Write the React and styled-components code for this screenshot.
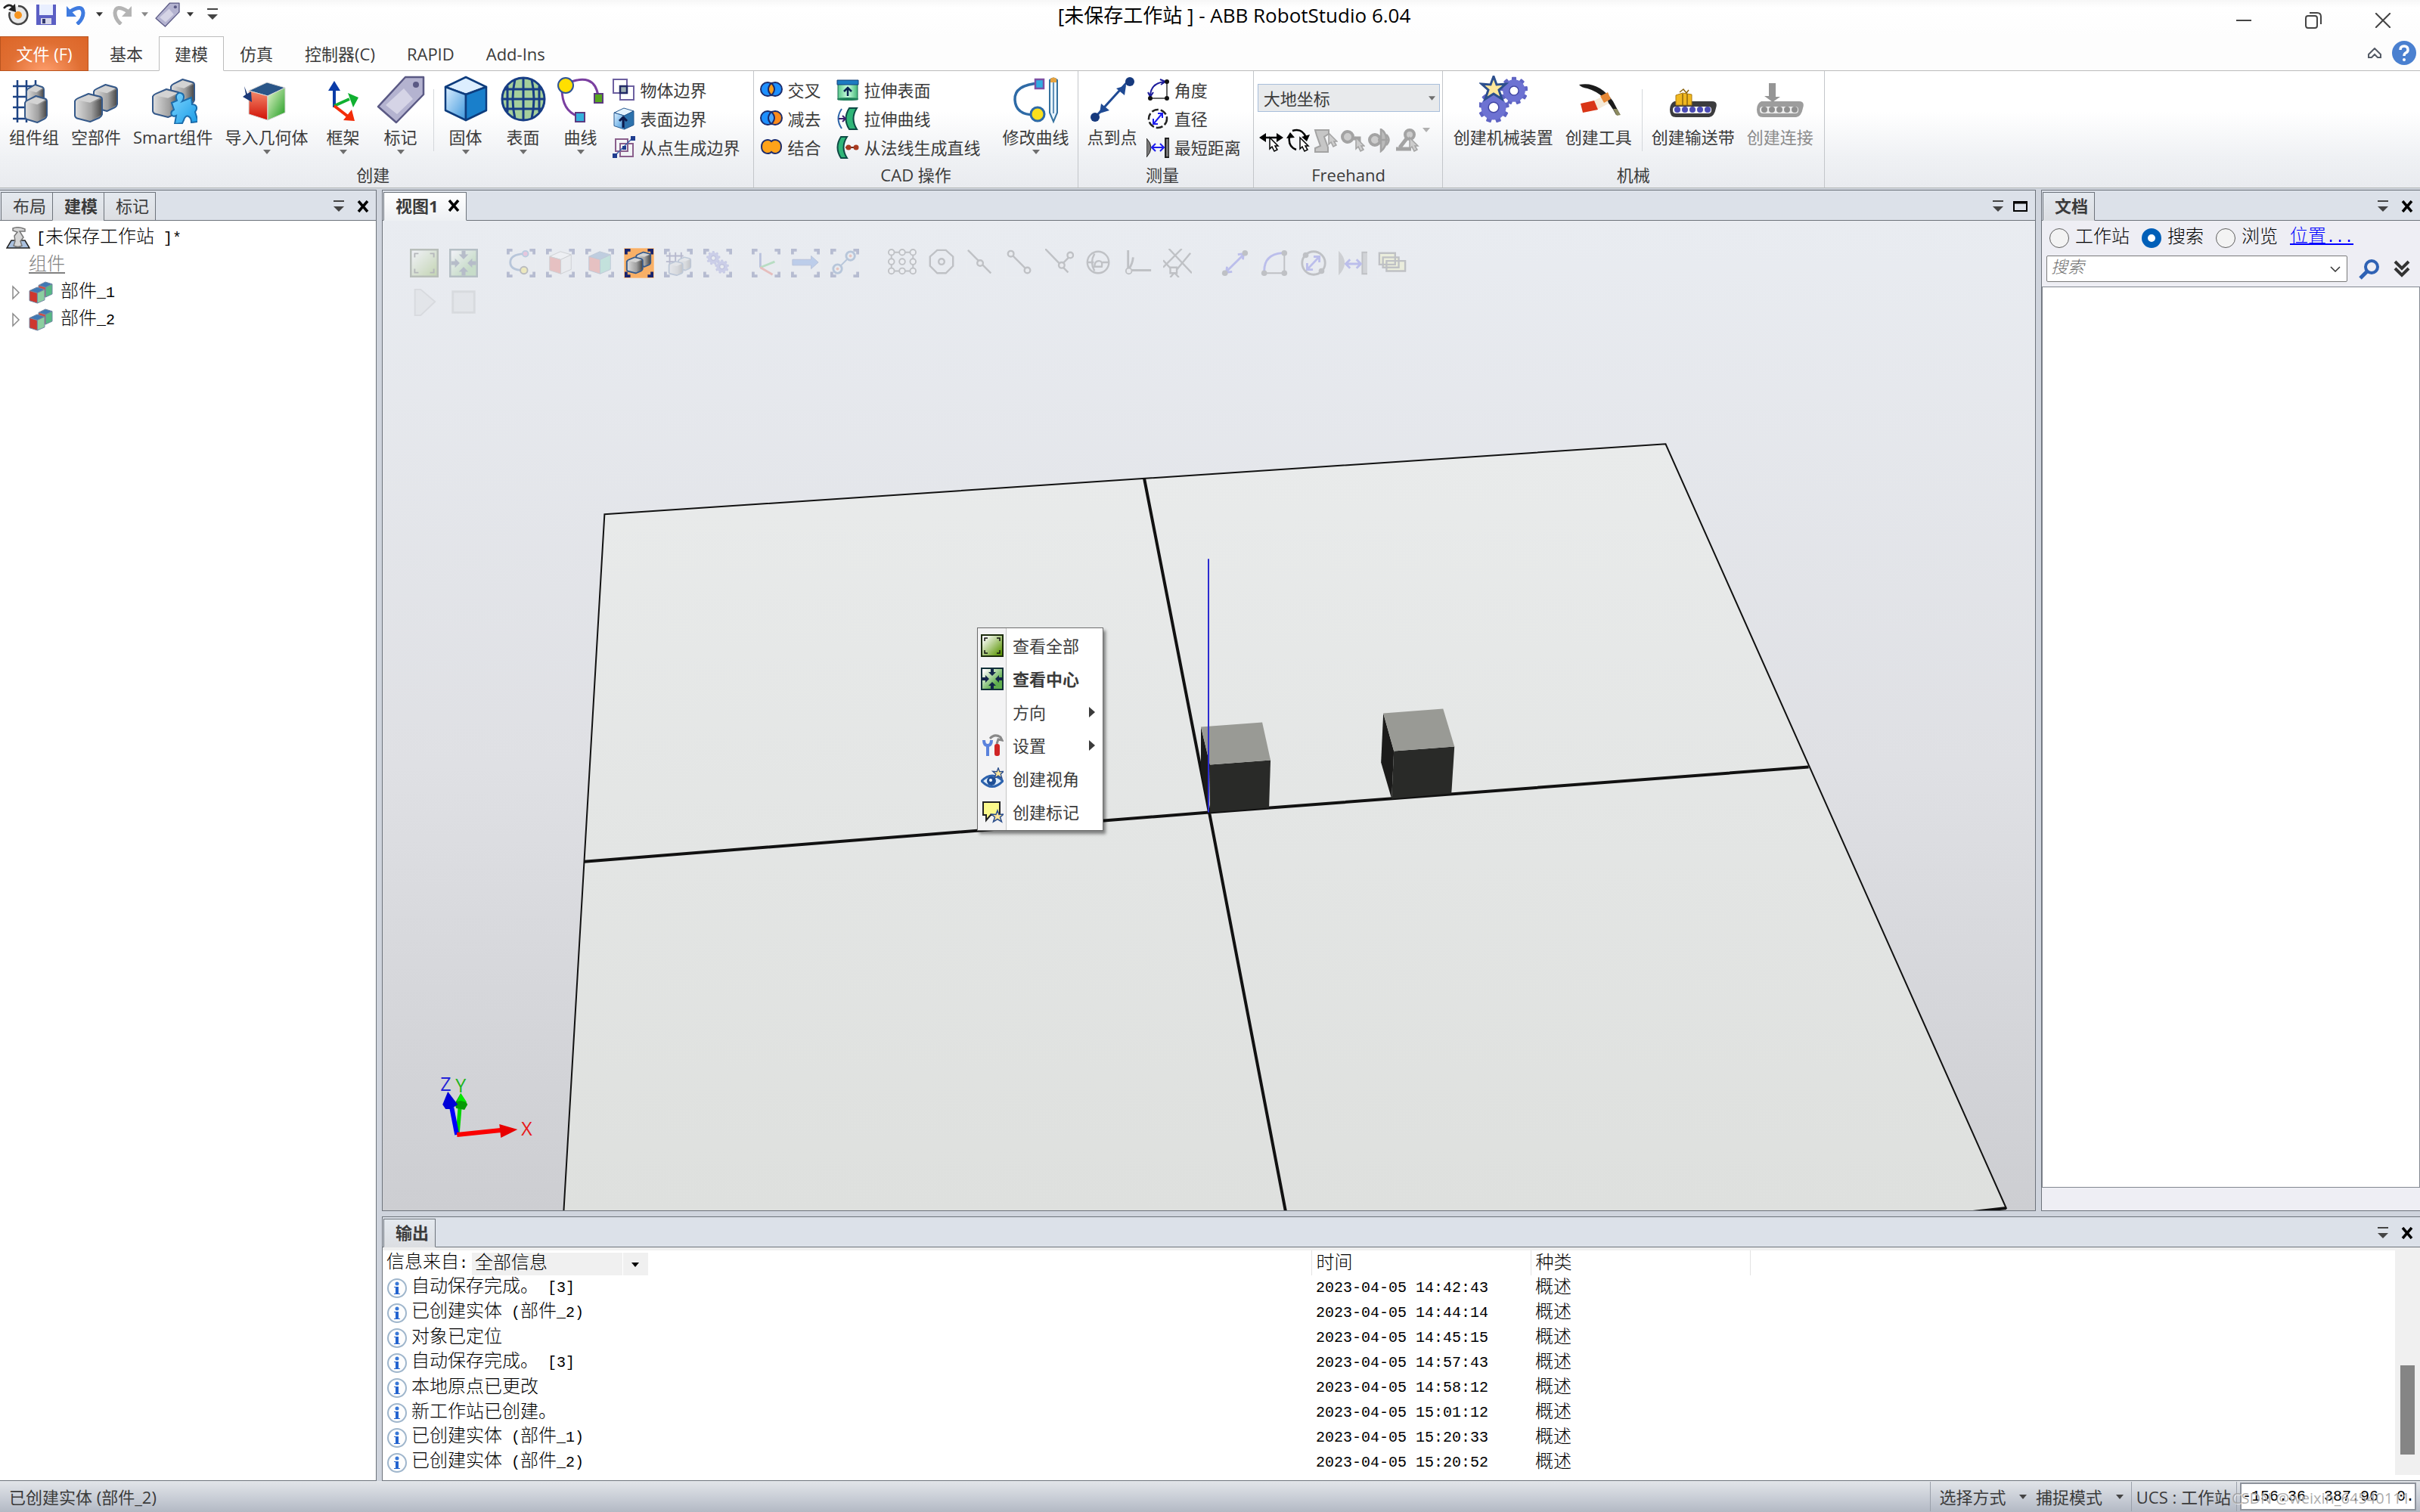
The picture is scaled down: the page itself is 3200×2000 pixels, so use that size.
import React from 'react';
import styled, { createGlobalStyle, css } from 'styled-components';

const UI_FONT = '"Open Sans", "Noto Sans CJK SC", sans-serif';
const SONG_FONT = '"Liberation Mono", "Noto Sans CJK SC", monospace';

const GlobalStyle = createGlobalStyle`
  * {
    box-sizing: border-box;
  }
  body {
    margin: 0;
    background: #cfd4dd;
    color: #3b3b3b;
    font-family: ${UI_FONT};
    font-size: 22px;
    line-height: 30px;
  }
  button, input, select {
    font: inherit;
    color: inherit;
    border: 0;
    padding: 0;
    margin: 0;
    background: none;
    appearance: none;
    border-radius: 0;
  }
  svg {
    display: block;
    flex: none;
  }
`;

const Page = styled.div`
  min-height: 100vh;
  display: flex;
  flex-direction: column;
`;

/* ---------- title bar ---------- */

const TitleBar = styled.header`
  display: flex;
  height: 48px;
  padding-right: 3px;
  background: linear-gradient(#f7f7f7, #fff 10px, #fdfdfd);
`;

const QuickAccess = styled.div`
  display: flex;
  align-items: center;
  min-width: 343px;
  height: 38px;
  padding-left: 1px;
`;

const QuickButton = styled.button`
  display: flex;
  align-items: center;
  justify-content: center;
  width: ${(p) => (p.$narrow ? '20px' : '40px')};
  height: 36px;
  color: #3b3b3b;
`;

const AppTitle = styled.h1`
  flex: 1;
  margin: 0;
  text-align: center;
  font-size: 26px;
  line-height: 40px;
  font-weight: 400;
  color: #000;
`;

const WindowButton = styled.button`
  display: flex;
  align-items: center;
  justify-content: center;
  width: 92px;
  height: 54px;
`;

/* ---------- ribbon ---------- */

const RibbonTabs = styled.nav`
  display: flex;
  height: 46px;
  background: #fdfdfd;
  border-bottom: 1px solid #bcbcbc;
`;

const RibbonTab = styled.button`
  height: 46px;
  padding: 0 20px;
  border: 1px solid transparent;
  ${(p) =>
    p.$active &&
    css`
      background: #fff;
      border-color: #bcbcbc;
      border-bottom-color: #fff;
    `}
`;

const FileTab = styled.button`
  width: 117px;
  margin-right: 7px;
  height: 46px;
  color: #fff;
  border: 1px solid #b9541f;
  background: radial-gradient(ellipse at 50% 110%, #ff9f6e, #e06f33 60%, #dc6527);
`;

const TabsEnd = styled.div`
  margin-left: auto;
  padding: 0 5px 2px 0;
  display: flex;
  align-items: center;
  gap: 14px;
`;

const Ribbon = styled.section`
  display: flex;
  height: 155px;
  border-bottom: 1px solid #b5b9b8;
  background: linear-gradient(#fff 35%, #eff1f4 75%, #e9ebef);
`;

const Group = styled.div`
  display: flex;
  flex-direction: column;
  border-right: 1px solid #c3c6ca;
  padding: 6px ${(p) => p.$right || 3}px 0 ${(p) => p.$left || 4}px;
`;

const GroupBody = styled.div`
  display: flex;
  height: 117px;
`;

const GroupLabel = styled.div`
  text-align: center;
  line-height: 28px;
`;

const BigButton = styled.button`
  display: flex;
  flex-direction: column;
  align-items: center;
  min-width: 76px;
  height: 112px;
  padding: 0 8px;
  white-space: nowrap;
  line-height: 34px;
  color: ${(p) => (p.disabled ? '#8b8b8b' : '#3b3b3b')};

  svg:first-child {
    margin: 0 -4px;
  }
`;

const Divider = styled.div`
  width: 1px;
  height: 82px;
  margin: 18px 4px 0 5px;
  background: #d4d7db;
`;

const SmallColumn = styled.div`
  display: flex;
  flex-direction: column;
  margin-right: ${(p) => p.$after || 0}px;
`;

const SmallButton = styled.button`
  display: flex;
  align-items: center;
  gap: 7px;
  height: 38px;
  padding: 0 4px;
  white-space: nowrap;
`;

const FreehandColumn = styled.div`
  width: 241px;
  padding-top: 11px;
`;

const Combo = styled.label`
  position: relative;
  display: block;
  height: 37px;
  background: #e8eaec;
  border: 1px solid #a8bedb;

  select {
    width: 100%;
    height: 35px;
    padding-left: 7px;
  }
  svg {
    position: absolute;
    right: 5px;
    top: 15px;
    pointer-events: none;
  }
`;

const FreehandRow = styled.div`
  display: flex;
  gap: 4px;
  padding: 21px 0 0 2px;

  button {
    height: 34px;
  }
`;

/* ---------- docked panels ---------- */

const Workspace = styled.main`
  flex: 1;
  display: grid;
  grid-template-columns: 498px minmax(0, 1fr) 501px;
  grid-template-rows: 1fr auto;
  gap: 7px;
  padding-top: 2px;
`;

const Panel = styled.section`
  display: flex;
  flex-direction: column;
  min-width: 0;
  border: 1px solid #6d737b;
  border-left-width: ${(p) => (p.$flushLeft ? 0 : 1)}px;
  border-right-width: ${(p) => (p.$flushRight ? 0 : 1)}px;
  background: ${(p) => p.$bg || '#fff'};
  grid-row: ${(p) => p.$row || 'auto'};
  grid-column: ${(p) => p.$col || 'auto'};
`;

const PanelStrip = styled.div`
  display: flex;
  height: 40px;
  padding: 2px 9px 0 1px;
  background: #dce1e9;
  border-bottom: 1px solid #6d737b;
`;

const PanelTab = styled.button`
  display: flex;
  align-items: center;
  gap: 12px;
  height: 38px;
  padding: 0 8px 3px 15px;
  margin-right: -1px;
  border: 1px solid #6d737b;
  background: linear-gradient(#e4e9ef, #dcdee2);
  white-space: nowrap;
  ${(p) =>
    p.$active &&
    css`
      font-weight: 700;
      border-bottom-color: ${p.$light ? '#edf0f3' : '#dcdee2'};
      background: ${p.$light ? 'linear-gradient(#fff, #edf0f3)' : 'linear-gradient(#e4e9ef, #dcdee2)'};
    `}
`;

const StripTools = styled.div`
  margin-left: auto;
  display: flex;
  align-items: center;
  gap: ${(p) => (p.$tight ? 13 : 17)}px;
`;

const Tree = styled.ul`
  list-style: none;
  margin: 0;
  padding: 5px 0;
  font-family: ${SONG_FONT};
  font-size: 24px;
  font-weight: 300;
  color: #000;
`;

const TreeRow = styled.li`
  display: flex;
  align-items: center;
  height: 36px;
  padding-left: ${(p) => p.$indent}px;
  gap: ${(p) => p.$gap || 9}px;

  u {
    color: #808080;
    text-underline-offset: 3px;
  }
`;

const Half = styled.span`
  font-size: 20px;
  white-space: pre;
`;

/* ---------- 3D view ---------- */

const Viewport = styled.div`
  position: relative;
  flex: 1;
  overflow: hidden;
  background: linear-gradient(#e9ecf1, #dfe0e4 55%, #cdced2);
`;

const Scene = styled.svg`
  position: absolute;
  inset: 0;
  width: 100%;
  height: 100%;
`;

const ViewTools = styled.div`
  position: relative;
  display: flex;
  gap: 12px;
  padding: ${(p) => (p.$first ? 36 : 12)}px 0 0 35px;
`;

const ViewTool = styled.button`
  width: 40px;
  height: 40px;
  margin-left: ${(p) => p.$space || 0}px;
  border: 1px solid rgba(255, 255, 255, 0.25);
  opacity: ${(p) => (p.$on ? 1 : p.$faint ? 0.1 : 0.23)};
  background: ${(p) => (p.$on ? '#f8b067' : 'none')};
`;

const ContextMenu = styled.menu`
  position: absolute;
  left: 786px;
  top: 538px;
  width: 167px;
  margin: 0;
  padding: 1px 0 2px;
  list-style: none;
  border: 1px solid #6d6d6d;
  background: linear-gradient(90deg, #f3f3f4 37px, #c4c4c4 37px, #c4c4c4 38px, #fff 38px);
  box-shadow: 3px 4px 4px rgba(0, 0, 0, 0.45);
`;

const MenuItem = styled.button`
  display: grid;
  grid-template-columns: 30px 1fr 12px;
  column-gap: 12px;
  align-items: center;
  width: 100%;
  height: 44px;
  padding: 0 6px 0 4px;
  text-align: left;
  white-space: nowrap;
  font-weight: ${(p) => (p.$strong ? 700 : 400)};
`;

/* ---------- document panel ---------- */

const RadioRow = styled.div`
  display: flex;
  align-items: center;
  gap: 16px;
  height: 45px;
  padding-left: 10px;
  font-family: ${SONG_FONT};
  font-size: 24px;
  font-weight: 300;
  color: #000;

  label {
    display: flex;
    align-items: center;
    gap: 8px;
  }
  input {
    width: 26px;
    height: 26px;
    border-radius: 50%;
    border: 1px solid #5f5f5f;
    background: #f3f3f3;
  }
  input:checked {
    border: 8px solid #005fb8;
    background: #fff;
  }
  a {
    color: #00f;
  }
`;

const SearchRow = styled.div`
  display: flex;
  align-items: center;
  gap: 15px;
  padding: 1px 10px 6px 6px;
`;

const SearchBox = styled.div`
  flex: 1;
  display: flex;
  align-items: center;
  height: 35px;
  padding: 0 8px 0 5px;
  border: 1px solid #7a7a7a;
  border-radius: 2px;
  background: #fff;

  input {
    flex: 1;
    min-width: 0;
    font-family: ${SONG_FONT};
    font-weight: 300;
  }
  input::placeholder {
    color: #6d6d6d;
    font-style: italic;
    opacity: 1;
  }
`;

const Results = styled.div`
  flex: 1;
  margin-bottom: 30px;
  border: 1px solid #828790;
  background: #fff;
`;

/* ---------- output ---------- */

const OutputBody = styled.div`
  display: flex;
  border-top: 4px solid #f0f0f0;
  padding-bottom: 7px;
`;

const LogTable = styled.table`
  flex: 1;
  table-layout: fixed;
  border-collapse: collapse;
  align-self: flex-start;
  width: 100%;
  font-family: ${SONG_FONT};
  font-size: 24px;
  font-weight: 300;
  color: #000;

  th {
    height: 33px;
    padding: 2px 6px 0;
    font-weight: 300;
    text-align: left;
    border-right: 1px solid #e3e3e3;
  }
  th:first-child,
  td:first-child {
    padding-left: 5px;
  }
  th:last-child {
    border-right: 0;
  }
  td {
    height: 33px;
    padding: 0 6px;
    white-space: nowrap;
  }
`;

const Message = styled.div`
  display: flex;
  align-items: center;
  gap: 5px;
`;

const Source = styled.label`
  display: flex;
  align-items: center;
  gap: 5px;
`;

const SourceSelect = styled.span`
  position: relative;
  width: 233px;
  height: 30px;
  background: linear-gradient(90deg, #f0f0f0 199px, #fff 199px, #fff 200px, #f0f0f0 200px);

  select {
    width: 100%;
    height: 30px;
    padding-left: 4px;
    display: block;
  }
  svg {
    position: absolute;
    right: 12px;
    top: 13px;
    pointer-events: none;
  }
`;

const ScrollTrack = styled.div`
  width: 33px;
  background: #f0f0f0;
  padding: 152px 7px 0;
`;

const ScrollThumb = styled.div`
  height: 118px;
  background: #858585;
`;

/* ---------- status bar ---------- */

const StatusBar = styled.footer`
  display: flex;
  align-items: center;
  height: 41px;
  padding: 0 4px 0 12px;
  background: linear-gradient(#e2e5e9, #c6cbd4 60%, #b3b9c4);
`;

const StatusMessage = styled.div`
  flex: 1;
`;

const StatusCell = styled.div`
  display: flex;
  align-items: center;
  height: 39px;
  padding: 0 ${(p) => p.$right || 10}px 0 ${(p) => p.$left || 6}px;
  gap: 12px;
  border-left: 1px solid #9ba1ab;
  white-space: pre;

  button {
    display: flex;
    align-items: center;
    gap: 12px;
  }
`;

const Coordinates = styled.div`
  position: relative;
  width: 233px;

  input {
    display: block;
    width: 100%;
    height: 37px;
    padding-left: 1px;
    border: 2px solid #8d929b;
    background: #fff;
    font-family: ${SONG_FONT};
    font-size: 20px;
    color: #000;
  }
`;

const Watermark = styled.span`
  position: absolute;
  right: 8px;
  top: 6px;
  font-size: 20px;
  white-space: nowrap;
  color: rgba(150, 150, 150, 0.8);
  text-shadow: 1px 1px 0 rgba(255, 255, 255, 0.7);
  pointer-events: none;
`;

/* ---------- drawings ---------- */

const HiddenSvg = styled.svg`
  position: absolute;
`;

const Defs = () => (
  <HiddenSvg width="0" height="0" aria-hidden="true">
    <defs>
      <linearGradient id="greyL" x1="0" x2="1"><stop offset="0" stopColor="#dedede" /><stop offset="1" stopColor="#777" /></linearGradient>
      <linearGradient id="greyR" x1="0" x2="1"><stop offset="0" stopColor="#a6a6a6" /><stop offset="1" stopColor="#4c4c4c" /></linearGradient>
      <linearGradient id="redG" x1="0" y1="0" x2="0" y2="1"><stop offset="0" stopColor="#f58a6b" /><stop offset="1" stopColor="#d01005" /></linearGradient>
      <linearGradient id="greenG" x1="0" y1="0" x2="1" y2="1"><stop offset="0" stopColor="#e8f8d0" /><stop offset="1" stopColor="#1c9a1c" /></linearGradient>
      <linearGradient id="blueG" x1="0" y1="0" x2="1" y2="1"><stop offset="0" stopColor="#dcefff" /><stop offset="1" stopColor="#3f97dc" /></linearGradient>
      <linearGradient id="viewG" x1="0" y1="0" x2="1" y2="1"><stop offset="0.1" stopColor="#fff" /><stop offset="0.9" stopColor="#5c9606" /></linearGradient>
      <linearGradient id="centerG" x1="0" y1="0" x2="1" y2="1"><stop offset="0.1" stopColor="#fff" /><stop offset="0.7" stopColor="#5fae4d" /></linearGradient>
      <linearGradient id="puzzle" x1="0" y1="0" x2="1" y2="1"><stop offset="0" stopColor="#7fd6ff" /><stop offset="1" stopColor="#189be6" /></linearGradient>
      <linearGradient id="teal" x1="0" y1="0" x2="1" y2="0"><stop offset="0" stopColor="#5cc98c" /><stop offset="0.5" stopColor="#c9ffe0" /><stop offset="1" stopColor="#45b878" /></linearGradient>
      <linearGradient id="floor" x1="0" y1="0" x2="0" y2="1"><stop offset="0" stopColor="#e9ebeb" /><stop offset="1" stopColor="#dee0de" /></linearGradient>
    </defs>
  </HiddenSvg>
);

const Svg = ({ w = 30, h = w, box, children }) => (
  <svg width={w} height={h} viewBox={box || `0 0 ${w} ${h}`} fill="none" aria-hidden="true">
    {children}
  </svg>
);

function Cube({ x, y, w, h, top = '#d0d0d0', left = 'url(#greyL)', right = 'url(#greyR)', stroke = '#3c6090', sw = 2 }) {
  const at = (px, py) => `${x + px * w},${y + py * h}`;
  return (
    <g stroke={stroke} strokeWidth={sw} strokeLinejoin="round">
      <polygon points={[at(0, 0.22), at(0.5, 0), at(1, 0.14), at(0.52, 0.36)].join(' ')} fill={top} />
      <polygon points={[at(0, 0.22), at(0.52, 0.36), at(0.52, 1), at(0, 0.84)].join(' ')} fill={left} />
      <polygon points={[at(0.52, 0.36), at(1, 0.14), at(1, 0.8), at(0.52, 1)].join(' ')} fill={right} />
    </g>
  );
}

/* rounded grey block used for parts and components */
function Block({ x, y, w, h }) {
  const p = (px, py) => `${x + px * w} ${y + py * h}`;
  return (
    <g strokeLinejoin="round">
      <path
        d={`M${p(0, 0.26)}Q${p(0.02, 0.2)} ${p(0.12, 0.16)}L${p(0.5, 0)}L${p(0.92, 0.1)}Q${p(1, 0.13)} ${p(1, 0.2)}V${y + 0.74 * h}Q${p(0.98, 0.82)} ${p(0.9, 0.86)}L${p(0.56, 1)}L${p(0.08, 0.88)}Q${p(0, 0.84)} ${p(0, 0.78)}z`}
        fill="url(#greyL)" stroke="#35598a" strokeWidth="2"
      />
      <path d={`M${p(0.58, 0.36)}L${p(0.97, 0.18)}V${y + 0.76 * h}L${p(0.58, 0.96)}z`} fill="url(#greyR)" />
      <path d={`M${p(0.06, 0.22)}L${p(0.5, 0.04)}L${p(0.93, 0.14)}L${p(0.56, 0.32)}z`} fill="#d3d3d3" />
    </g>
  );
}

const Gear = ({ cx, cy, r }) => (
  <g transform={`translate(${cx} ${cy})`}>
    {[0, 40, 80, 120, 160, 200, 240, 280, 320].map((a) => (
      <rect key={a} x={-r * 0.18} y={-r * 1.08} width={r * 0.36} height={r * 0.4} rx="1" fill="#5f64c4" transform={`rotate(${a})`} />
    ))}
    <circle r={r * 0.62} stroke="#6d72d2" strokeWidth={r * 0.5} />
    <circle r={r * 0.36} stroke="#4146a5" strokeWidth="1.5" />
  </g>
);

const Caret = ({ color = '#6e6e6e', w = 10 }) => (
  <Svg w={w} h={6} box="0 0 10 6"><path d="M0 0h10L5 6z" fill={color} /></Svg>
);

const TagShape = () => (
  <>
    <path d="M38 2h24v23L26 62 2 41z" fill="#b4b3d0" stroke="#5a5984" strokeWidth="2.5" strokeLinejoin="round" />
    <path d="M36 17l12 14-21 20-15-12z" fill="#d5d4e6" />
    <circle cx="52" cy="12" r="4" fill="#5a5984" />
  </>
);

const StarShape = ({ x, y, s = 1 }) => (
  <path
    transform={`translate(${x} ${y}) scale(${s})`}
    d="M0-16l4 11 12-1-9 8 4 12-11-7-11 7 4-12-9-8 12 1z"
    fill="#ffe79a" stroke="#2c4f8d" strokeWidth="3"
  />
);

const big = {
  group: (
    <Svg w={64}>
      <path d="M10 6v56M22 6v56M34 6v12M4 14h34M4 28h30M4 42h30M4 57h30" stroke="#1d4384" strokeWidth="2.5" />
      <Block x={22} y={12} w={23} h={32} />
      <Block x={20} y={27} w={29} h={35} />
    </Svg>
  ),
  part: (
    <Svg w={64}>
      <Block x={29} y={12} w={31} h={35} />
      <Block x={4} y={24} w={36} h={37} />
    </Svg>
  ),
  smart: (
    <Svg w={64}>
      <Block x={29} y={5} w={31} h={37} />
      <Block x={5} y={18} w={36} h={37} />
      <path d="M30 36l7-3c-3-7 1-11 5-10 5 1 5 7 2 11l12-5 1 9c6 0 8 5 4 10l4 13-9 1c0-9-8-12-10-3l-2 4-10 1 2-11c-7 3-9-5-3-8z" fill="url(#puzzle)" stroke="#1b6cab" strokeWidth="2" />
    </Svg>
  ),
  geometry: (
    <Svg w={64}>
      <Cube x={8} y={9} w={48} h={50} top="#2a5688" left="url(#redG)" right="url(#greenG)" stroke="#d8d8d8" sw={1} />
      <path d="M2 14l4 10 5-3 1 14-12-7 4-3z" fill="#1c3977" />
    </Svg>
  ),
  frame: (
    <Svg w={64}>
      <path d="M20 42V14" stroke="#0b3ca8" strokeWidth="4" />
      <path d="M20 7l8 13H12z" fill="#0b3ca8" />
      <path d="M20 40l20-9" stroke="#10b030" strokeWidth="4" />
      <path d="M38 23l14 6-7 13z" fill="#10b030" />
      <path d="M20 40l18 14" stroke="#f32c08" strokeWidth="4" />
      <path d="M43 45l4 15-15-1z" fill="#f32c08" />
    </Svg>
  ),
  tag: <Svg w={64}><TagShape /></Svg>,
  solid: (
    <Svg w={64}>
      <g stroke="#0d3c7d" strokeWidth="2.5" strokeLinejoin="round">
        <path d="M32 2l27 13-27 10L5 15z" fill="#dceeff" />
        <path d="M5 15l27 10v34L5 46z" fill="url(#blueG)" />
        <path d="M59 15L32 25v34l27-13z" fill="#197fcb" />
      </g>
    </Svg>
  ),
  surface: (
    <Svg w={64}>
      <circle cx="32" cy="31" r="28" fill="#a5cf9b" stroke="#173d85" strokeWidth="3" />
      <path d="M32 3v56M21 5q-6 26 0 52M43 5q6 26 0 52M11 14v34M53 14v34M4 31h56M8 18h48M8 44h48" stroke="#173d85" strokeWidth="3" />
    </Svg>
  ),
  curve: (
    <Svg w={64}>
      <path d="M12 11Q50-6 55 27M7 17q0 30 22 37" stroke="#7a3fa0" strokeWidth="3" />
      <circle cx="12" cy="13" r="10" fill="#ffdf00" stroke="#2f5496" strokeWidth="2" />
      <rect x="50" y="24" width="11" height="12" fill="#57a51e" stroke="#5b3a80" strokeWidth="2" />
      <rect x="25" y="49" width="12" height="12" fill="#34b1dd" stroke="#5b3a80" strokeWidth="2" />
    </Svg>
  ),
  modify: (
    <Svg w={64}>
      <path d="M37 10Q3 12 4 32t26 20" stroke="#2e6aa6" strokeWidth="3.5" />
      <rect x="31" y="5" width="11" height="12" fill="#31ace0" stroke="#7c50a4" strokeWidth="2.5" />
      <circle cx="34" cy="51" r="9" fill="#fbe01c" stroke="#2e6aa6" strokeWidth="3" />
      <path d="M50 6q5-5 10 0v43l-5 12-5-12z" fill="#e8f4ff" stroke="#35719f" strokeWidth="2" />
      <path d="M55 8v42" stroke="#35719f" strokeWidth="1.5" />
      <path d="M51 4q4-3 8 0v5h-8z" fill="#e6a340" />
    </Svg>
  ),
  point: (
    <Svg w={64}>
      <path d="M12 52L52 8" stroke="#1f4a94" strokeWidth="3" />
      <circle cx="55" cy="8" r="6" fill="#16397d" />
      <circle cx="9" cy="55" r="6" fill="#16397d" />
      <path d="M50 13l-2 13-11-9zM15 50l2-13 11 9z" fill="#1f4a94" />
    </Svg>
  ),
  mechanism: (
    <Svg w={64}>
      <Gear cx={46} cy={20} r={17} />
      <Gear cx={19} cy={42} r={19} />
      <StarShape x={19} y={17} />
    </Svg>
  ),
  tool: (
    <Svg w={64}>
      <path d="M6 12q26-5 45 22l9 17-5 1q-14-28-38-35-8-1-11-5z" fill="#1c1c1c" />
      <path d="M56 44l5 8-5 1-5-9z" fill="#8c8a60" />
      <path d="M24 34l18-9 3 12-17 9z" fill="#f5ead8" />
      <path d="M8 37l18-4 5 12-20 4z" fill="#d93516" />
      <path d="M34 27l10-5 4 9-9 5z" fill="#e68836" />
    </Svg>
  ),
  conveyor: (
    <Svg w={64}>
      <path d="M7 34h50q8 0 5 9-2 11-9 12H9q-8 0-8-10 0-8 6-11z" fill="#3c3c3e" />
      <rect x="5" y="41" width="51" height="9" rx="4" fill="#f3f3f3" />
      {[11, 21, 31, 41, 51].map((x) => <circle key={x} cx={x} cy="45" r="4" fill="#4a4ab4" />)}
      <path d="M9 26l9-3 12 2v14H9z" fill="#f0b81f" stroke="#ab7b14" />
      <path d="M18 24v15M24 24v15M14 22l5-4 4 5 3-4" stroke="#8b6510" strokeWidth="1.5" />
    </Svg>
  ),
  connect: (
    <Svg w={64}>
      <path d="M7 34h50q8 0 5 9-2 11-9 12H9q-8 0-8-10 0-8 6-11z" fill="#9d9d9d" />
      <rect x="5" y="41" width="51" height="9" rx="4" fill="#ececec" />
      {[11, 21, 31, 41, 51].map((x) => <circle key={x} cx={x} cy="45" r="4" fill="#8f8f8f" />)}
      <path d="M17 10h9v18h6L22 35 11 27h6z" fill="#959595" />
    </Svg>
  ),
};

const lens = (left, mid, right) => (
  <Svg>
    <g stroke="#1c2c6c" strokeWidth="2">
      <circle cx="10" cy="14" r="9" fill={left} />
      <circle cx="20" cy="14" r="9" fill={right} />
      <path d="M15 6q8 8 0 16-8-8 0-16z" fill={mid} />
    </g>
  </Svg>
);

const ArcMeasure = () => (
  <Svg>
    <path d="M27 4v22H5" stroke="#333" strokeWidth="1.5" />
    <path d="M5 24Q5 6 24 4M2 18l3 6 4-6M18 1l7 3-6 4" stroke="#1c1c9c" strokeWidth="2" />
    <circle cx="27" cy="4" r="3" fill="#111" /><circle cx="27" cy="26" r="3" fill="#111" /><circle cx="5" cy="26" r="3" fill="#111" />
  </Svg>
);

const Diameter = () => (
  <Svg>
    <circle cx="15" cy="15" r="12" stroke="#222" strokeWidth="2.5" strokeDasharray="9 3" />
    <path d="M10 21L20 9M9 15v7h6M15 8h6v6" stroke="#1c1cee" strokeWidth="2" />
  </Svg>
);

const Distance = () => (
  <Svg>
    <path d="M0 3q12 12 0 25z" fill="#777" stroke="#222" />
    <path d="M30 3h-5v25h5z" fill="#777" stroke="#222" strokeWidth="2" />
    <path d="M7 15h16M12 10l-5 5 5 5M18 10l5 5-5 5" stroke="#1c1cee" strokeWidth="2" />
  </Svg>
);

const small = {
  body: <Svg><path d="M1 1h18v18H1zM10 10h18v18H10z" stroke="#6d60a0" strokeWidth="2" /><path d="M10 10h9v9h-9z" fill="#9fb0b4" stroke="#222a66" strokeWidth="2.5" /></Svg>,
  face: <Svg><Cube x={2} y={1} w={26} h={28} top="#e4f3ff" left="url(#blueG)" right="#2c72ad" stroke="#27598f" sw={1} /><path d="M14 27V14M9 18l5-5 5 5" stroke="#0c1b4c" strokeWidth="3" /></Svg>,
  points: <Svg><path d="M4 4h16v16H4zM10 10h17v17H10z" stroke="#8a5f8c" strokeWidth="2" /><path d="M3 26L26 3" stroke="#3b5fa6" strokeWidth="1.5" /><path d="M24 0h6v6h-6zM0 23h6v6H0zM13 13h5v5h-5z" fill="#1f3d8f" /></Svg>,
  intersect: lens('#1e90ff', '#ffa01c', '#1e90ff'),
  subtract: lens('#1e90ff', '#4fa9ff', '#ff8b1a'),
  union: <Svg><path d="M2 14c0-9 9-11 13-7 4-4 13-2 13 7s-9 11-13 7c-4 4-13 2-13-7z" fill="#ffa31a" stroke="#1c2c6c" strokeWidth="2" /></Svg>,
  extrudeFace: <Svg><path d="M2 4h26v24H2z" fill="url(#teal)" stroke="#1d6a55" /><path d="M1 2h28v6H1z" fill="#1d7cc2" stroke="#133f78" /><ellipse cx="15" cy="27" rx="14" ry="2" fill="#20805a" /><path d="M15 23V13M10 17l5-5 5 5" stroke="#0a2350" strokeWidth="2.5" /></Svg>,
  extrudeCurve: <Svg><path d="M7 2q-9 13 0 26" stroke="#2c64a8" strokeWidth="2" /><path d="M17 1h10q-9 14 0 28H17q-9-14 0-28z" fill="#2fb678" stroke="#0e4a45" strokeWidth="2" /><path d="M3 15h8M8 11l4 4-4 4" stroke="#3c206c" strokeWidth="2" /></Svg>,
  normal: <Svg><path d="M6 1h8q-9 14 0 28H6q-9-14 0-28z" fill="#2fb678" stroke="#0e4a45" strokeWidth="2" /><path d="M12 15h15" stroke="#6c2d20" strokeWidth="2" /><circle cx="16" cy="15" r="3.5" fill="#a83a20" /><circle cx="26" cy="15" r="3.5" fill="#a83a20" /></Svg>,
  angle: <ArcMeasure />,
  diameter: <Diameter />,
  distance: <Distance />,
};

const Cursor = ({ x = 14, y = 12, c = '#000' }) => (
  <path transform={`translate(${x} ${y})`} d="M0 0v15l3-3 3 6 4-2-3-5h4z" fill={c === '#000' ? '#fff' : '#ccc'} stroke={c} strokeWidth="1.5" />
);

const GREY = '#a3a3a3';
const freehand = [
  ['移动', <Svg w={32}><path d="M5 12h22" stroke="#000" strokeWidth="2.5" /><path d="M0 12l9-6v12zM32 12l-9-6v12z" fill="#000" /><Cursor /></Svg>],
  ['旋转', <Svg w={32}><path d="M8 3q13-4 18 9M4 11q-2 13 9 17" stroke="#000" strokeWidth="2.5" /><path d="M31 8l-4 9-7-6zM0 13l5-8 6 7z" fill="#000" /><Cursor x={18} /></Svg>],
  ['手动关节', <Svg w={32}><path d="M2 2h18v5l-6 4 5 14v6H2v-5l7-3-5-14z" fill="#c6c6c6" stroke={GREY} strokeWidth="2" /><Cursor x={20} y={6} c={GREY} /></Svg>],
  ['手动线性', <Svg w={32}><circle cx="9" cy="11" r="7" fill="#ccc" stroke={GREY} strokeWidth="4" /><path d="M16 13h8v5" stroke={GREY} strokeWidth="5" /><Cursor x={20} y={12} c={GREY} /></Svg>],
  ['手动重定位', <Svg w={32}><circle cx="9" cy="15" r="7" fill="#ccc" stroke={GREY} strokeWidth="4" /><path d="M17 1q7 4 7 14t-7 15zM24 8q7 7 0 14M13 15h15" fill="#bbb" stroke={GREY} strokeWidth="2.5" /></Svg>],
  ['多个机器人', <Svg w={32}><circle cx="19" cy="8" r="6" fill="#ccc" stroke={GREY} strokeWidth="4" /><path d="M16 12L6 25M1 27h20" stroke={GREY} strokeWidth="5" /><Cursor x={19} y={12} c={GREY} /></Svg>],
];

const ViewAll = ({ w = 30 }) => (
  <Svg w={w} box="0 0 30 30">
    <path d="M1 1h28v28H1z" fill="url(#viewG)" stroke="#1c2c0c" strokeWidth="2" />
    <path d="M5 9V5h4M21 5h4v4M25 21v4h-4M9 25H5v-4" stroke="#111" strokeWidth="1.5" />
  </Svg>
);

const ViewCenter = ({ w = 30 }) => (
  <Svg w={w} box="0 0 30 30">
    <path d="M1 1h28v28H1z" fill="url(#centerG)" stroke="#12303a" strokeWidth="2" />
    <path d="M15 11l-5-5h3V2h4v4h3zM15 19l-5 5h3v4h4v-4h3zM11 15l-5-5v3H2v4h4v3zM19 15l5-5v3h4v4h-4v3z" fill="#13264a" />
  </Svg>
);

const Corners = () => <path d="M2 8V2h6M32 2h6v6M38 32v6h-6M8 38H2v-6" stroke="#16236e" strokeWidth="4" />;
const View40 = ({ corners, children }) => (
  <Svg w={38} box="0 0 40 40">{corners && <Corners />}{children}</Svg>
);
const K = '#3a3a3a';

const viewTools = [
  ['查看全部', <ViewAll w={38} />],
  ['查看中心', <ViewCenter w={38} />],
  ['选择曲线', <View40 corners><path d="M24 7Q5 8 5 19t18 11" stroke="#1c4f95" strokeWidth="3" /><circle cx="26" cy="7" r="4" fill="#e055a0" stroke="#2b6cb0" strokeWidth="2" /><circle cx="24" cy="30" r="5" fill="#fbe01c" stroke="#222" strokeWidth="2" /></View40>, 24],
  ['选择表面', <View40 corners><Cube x={5} y={4} w={30} h={31} left="#e03a2c" top="#fff" right="#eee" stroke="#777" sw={1} /></View40>],
  ['选择物体', <View40 corners><Cube x={5} y={4} w={30} h={31} top="#3a6ea8" left="#e03a2c" right="#4ec29c" stroke="#3a5a88" sw={1} /></View40>],
  ['选择部件', <View40 corners><Block x={16} y={5} w={20} h={20} /><Block x={3} y={12} w={22} h={22} /></View40>, 0, true],
  ['选择组', <View40 corners><path d="M8 5v18M16 5v18M24 5v9M3 10h24M3 18h14" stroke="#1a1a60" strokeWidth="2" /><Block x={20} y={12} w={17} h={18} /><Block x={7} y={18} w={19} h={19} /></View40>],
  ['选择机械装置', <View40 corners><Gear cx={14} cy={13} r={9} /><Gear cx={26} cy={25} r={9} /></View40>],
  ['选择目标点', <View40 corners><path d="M12 26V6" stroke="#2440a0" strokeWidth="3" /><path d="M12 26l20-8" stroke="#18b030" strokeWidth="3" /><path d="M12 26l17 10" stroke="#e02c18" strokeWidth="3" /></View40>, 12],
  ['选择移动指令', <View40 corners><path d="M2 15h26v-5l10 9-10 9v-5H2z" fill="#2f6fd8" stroke="#183a90" /></View40>],
  ['选择路径', <View40 corners><circle cx="10" cy="28" r="6" stroke="#1b4f95" strokeWidth="3" /><circle cx="28" cy="10" r="6" stroke="#1b4f95" strokeWidth="3" /><path d="M15 23l8-8" stroke="#1b4f95" strokeWidth="2" /><circle cx="10" cy="28" r="2" fill="#e44c20" /><circle cx="28" cy="10" r="2" fill="#e44c20" /></View40>],
  ['捕捉对象', <View40><path d="M5 5h30v26H5z" stroke={K} strokeWidth="2" />{[5, 20, 35].map((x) => [5, 18, 31].map((y) => <circle key={`${x}-${y}`} cx={x} cy={y} r="4" fill="#fff" stroke={K} strokeWidth="2" />))}</View40>, 24],
  ['捕捉中心', <View40><path d="M14 2h12l10 9v13l-10 10H14L4 24V11z" stroke={K} strokeWidth="2.5" /><circle cx="20" cy="18" r="4" stroke={K} strokeWidth="2.5" /></View40>],
  ['捕捉中点', <View40><path d="M2 2l32 32" stroke={K} strokeWidth="2.5" /><circle cx="19" cy="20" r="4" fill="#eee" stroke={K} strokeWidth="2.5" /></View40>],
  ['捕捉末端', <View40><path d="M7 7l22 22" stroke={K} strokeWidth="2.5" /><circle cx="7" cy="7" r="4" fill="#eee" stroke={K} strokeWidth="2.5" /><circle cx="30" cy="30" r="4" fill="#eee" stroke={K} strokeWidth="2.5" /></View40>],
  ['捕捉边缘', <View40><path d="M0 0l32 33M22 23L34 11" stroke={K} strokeWidth="2.5" /><circle cx="23" cy="23" r="4" fill="#eee" stroke={K} strokeWidth="2.5" /><circle cx="35" cy="9" r="4" fill="#eee" stroke={K} strokeWidth="2.5" /></View40>],
  ['捕捉重心', <View40><circle cx="19" cy="19" r="15" stroke={K} strokeWidth="2.5" /><path d="M4 19h9M25 19h9M14 7q-7 12 0 24M14 25q0-8 6-8t4 8z" stroke={K} strokeWidth="2.5" /></View40>],
  ['捕捉本地原点', <View40><path d="M6 2v28h32M7 28q5-6 6-16" stroke={K} strokeWidth="3" /><circle cx="7" cy="31" r="4" fill="#eee" stroke={K} strokeWidth="2" /></View40>],
  ['捕捉网格', <View40><path d="M8 0l32 34M26 0L0 26M38 6L10 40M0 16l22 24" stroke={K} strokeWidth="2.5" /><path d="M10 26h9v8h-9z" fill="#eee" stroke={K} strokeWidth="2.5" /></View40>],
  ['点到点', <View40><path d="M7 33L33 7M9 25l-1 8 8-1M24 8l8-1-1 8" stroke="#2b2bdc" strokeWidth="3" /><circle cx="6" cy="34" r="4" fill={K} /><circle cx="34" cy="6" r="4" fill={K} /></View40>, 24],
  ['角度', <View40><path d="M34 6v28H6" stroke={K} strokeWidth="2" /><path d="M6 31Q6 8 31 6" stroke="#2b2bdc" strokeWidth="3" /><circle cx="34" cy="6" r="4" fill={K} /><circle cx="34" cy="34" r="4" fill={K} /><circle cx="6" cy="34" r="4" fill={K} /></View40>],
  ['直径', <View40><circle cx="20" cy="20" r="16" stroke={K} strokeWidth="3" /><path d="M12 28L27 12M11 20v9h8M20 11h8v8" stroke="#2b2bdc" strokeWidth="3" /><circle cx="9" cy="9" r="4" fill={K} /><circle cx="31" cy="31" r="4" fill={K} /></View40>],
  ['最短距离', <View40><path d="M0 3q17 17 0 34z" fill="#777" /><path d="M40 5h-7v30h7" fill="#888" stroke={K} strokeWidth="2" /><path d="M10 21h21M16 15l-6 6 6 6M25 15l6 6-6 6" stroke="#2b2bdc" strokeWidth="3" /></View40>],
  ['保持', <View40><g fill="#f4f79c" stroke={K} strokeWidth="2.5"><path d="M2 6h22v16H2zM7 12h22v14H7zM12 17h26v14H12z" /></g></View40>],
];

const Info = () => (
  <Svg w={28}>
    <circle cx="14" cy="14" r="12" fill="#fdfdfd" stroke="#9fb6cc" strokeWidth="2" />
    <circle cx="14" cy="8" r="2.5" fill="#3a78d6" />
    <path d="M10 12h6v9h2v1h-8v-1h2v-8h-2z" fill="#2363cf" />
  </Svg>
);

const MenuGlyph = () => (
  <Svg w={14} h={18}><path d="M0 2h14" stroke="#444" strokeWidth="2" /><path d="M0 9h14l-7 7z" fill="#444" /></Svg>
);
const CloseGlyph = () => (
  <Svg w={16} h={16}><path d="M2 1l12 14M14 1L2 15" stroke="#000" strokeWidth="3.5" /></Svg>
);

const PartIcon = () => (
  <Svg w={32}>
    <Cube x={13} y={2} w={18} h={20} top="#3f79b5" left="#d8493f" right="#57b884" stroke="#7188a4" sw={1} />
    <Cube x={1} y={9} w={20} h={21} top="#3f79b5" left="#cf372e" right="#8ccfa0" stroke="#7188a4" sw={1} />
  </Svg>
);

const Expander = () => (
  <Svg w={12} h={20}><path d="M1 2l8 8-8 8z" stroke="#8a8a8a" strokeWidth="1.5" /></Svg>
);

/* ASCII runs are half the width of a Chinese character */
const Song = ({ children }) =>
  children.split(/([\x20-\x7e]+)/).map((part, i) => (i % 2 ? <Half key={i}>{part}</Half> : part));

const Big = ({ icon, label, menu, disabled }) => (
  <BigButton disabled={disabled}>
    {big[icon]}
    {label}
    {menu && <Caret />}
  </BigButton>
);

const SmallList = ({ items, after }) => (
  <SmallColumn $after={after}>
    {items.map(([icon, label]) => (
      <SmallButton key={icon}>{small[icon]}{label}</SmallButton>
    ))}
  </SmallColumn>
);

const log = [
  ['自动保存完成。 [3]', '14:42:43'],
  ['已创建实体 (部件_2)', '14:44:14'],
  ['对象已定位', '14:45:15'],
  ['自动保存完成。 [3]', '14:57:43'],
  ['本地原点已更改', '14:58:12'],
  ['新工作站已创建。', '15:01:12'],
  ['已创建实体 (部件_1)', '15:20:33'],
  ['已创建实体 (部件_2)', '15:20:52'],
];

const menuItems = [
  { label: '查看全部', icon: <ViewAll /> },
  { label: '查看中心', icon: <ViewCenter />, strong: true },
  { label: '方向', sub: true },
  {
    label: '设置',
    sub: true,
    icon: <Svg><path d="M4 8q0 7 5 7t5-7M9 15v14" stroke="#5a82dc" strokeWidth="4" /><path d="M12 6q6-7 14-2l2 4-5-1-2 6" stroke="#888" strokeWidth="3" /><rect x="18" y="13" width="7" height="16" rx="3" fill="#cf2424" /></Svg>,
  },
  {
    label: '创建视角',
    icon: <Svg><path d="M1 18q14-14 28 0-14 15-28 0z" fill="#dcebfa" stroke="#2d63ae" strokeWidth="3" /><circle cx="14" cy="18" r="6" fill="#1e4f96" /><circle cx="13" cy="17" r="2" fill="#fff" /><StarShape x={23} y={8} s={0.45} /></Svg>,
  },
  {
    label: '创建标记',
    icon: <Svg><path d="M3 2h22v17H13l-6 7v-7H3z" fill="#fbf98b" stroke="#222" strokeWidth="2" /><StarShape x={22} y={21} s={0.5} /></Svg>,
  },
];

function SceneDrawing() {
  return (
    <Scene viewBox="505 292 2187 1308" preserveAspectRatio="xMidYMid slice" fill="none">
      <path d="M800 680L2202 587 2652 1597 2612 1602H746z" fill="url(#floor)" stroke="#111" strokeWidth="2" />
      <path d="M1513 632L1599 1074 1700 1602M773 1139L1599 1074 2391 1014" stroke="#111" strokeWidth="4" />
      <path d="M2652 1597l-44 5" stroke="#111" strokeWidth="4" />
      <polygon points="1588,961 1600,1011 1599,1074 1588,1018" fill="#1b1b1a" />
      <polygon points="1600,1011 1680,1005 1678,1068 1600,1074" fill="#292a28" />
      <polygon points="1588,961 1669,955 1680,1005 1600,1011" fill="#999a95" />
      <polygon points="1829,943 1843,993 1840,1056 1826,1008" fill="#1b1b1a" />
      <polygon points="1843,993 1923,987 1919,1049 1840,1056" fill="#292a28" />
      <polygon points="1829,943 1908,937 1923,987 1843,993" fill="#999a95" />
      <path d="M1598 739v335" stroke="#2b2bd0" strokeWidth="2" />
      <path d="M609 1462l-3 36" stroke="#00d400" strokeWidth="5" />
      <path d="M610 1445l9 15-4 7-11-2-2-6z" fill="#069a06" />
      <path d="M610 1445l8 12-8-2-5 1z" fill="#00e800" />
      <path d="M598 1464l7 36" stroke="#0000fa" strokeWidth="6" />
      <path d="M593 1443l13 17-9 6-7 0-4-6z" fill="#0000d8" />
      <path d="M605 1500l58-6" stroke="#fa0000" strokeWidth="6" />
      <path d="M661 1486l24 7-22 11z" fill="#e80000" />
      <g fontFamily="Open Sans, sans-serif" fontSize="25">
        <text x="583" y="1442" fill="#2222d8">Z</text>
        <text x="603" y="1444" fill="#1cb41c">Y</text>
        <text x="690" y="1501" fill="#e81818">X</text>
      </g>
    </Scene>
  );
}

function App() {
  return (
    <Page>
      <GlobalStyle />
      <Defs />
      <TitleBar>
        <QuickAccess>
          <QuickButton aria-label="RobotStudio">
            <Svg w={34} h={32}><circle cx="20" cy="17" r="12" fill="#e8e8e8" /><path d="M20 5a12 12 0 1 1-11 8" stroke="#444" strokeWidth="2.5" /><circle cx="20" cy="17" r="5" fill="#f7941d" /><path d="M1 8q6-7 12-2" stroke="#222" strokeWidth="2.5" /><path d="M16 2l1 11-10-3z" fill="#222" /></Svg>
          </QuickButton>
          <QuickButton aria-label="保存">
            <Svg w={28}><path d="M1 1h26v27H1z" fill="#5b5fc4" /><path d="M5 1h18v14H5z" fill="#e9efff" /><path d="M7 19h14v8H7z" fill="#d8d8e8" /><path d="M9 20h4v6H9z" fill="#333a70" /></Svg>
          </QuickButton>
          <QuickButton aria-label="撤消">
            <Svg w={28}><path d="M6 10q16-10 17 2 0 8-8 15" stroke="#3f7be0" strokeWidth="5" /><path d="M1 3v14h13z" fill="#3f7be0" /></Svg>
          </QuickButton>
          <QuickButton $narrow aria-label="撤消列表"><Caret color="#333" w={9} /></QuickButton>
          <QuickButton aria-label="恢复">
            <Svg w={28}><path d="M22 10Q6 0 5 12q0 8 8 15" stroke="#b4b4b4" strokeWidth="5" /><path d="M27 3v14H14z" fill="#b4b4b4" /></Svg>
          </QuickButton>
          <QuickButton $narrow aria-label="恢复列表"><Caret color="#888" w={9} /></QuickButton>
          <QuickButton aria-label="标记"><Svg w={33} box="0 0 64 64"><TagShape /></Svg></QuickButton>
          <QuickButton $narrow aria-label="标记列表"><Caret color="#333" w={9} /></QuickButton>
          <QuickButton aria-label="自定义"><MenuGlyph /></QuickButton>
        </QuickAccess>
        <AppTitle>[未保存工作站 ] - ABB RobotStudio 6.04</AppTitle>
        <WindowButton aria-label="最小化"><Svg w={20}><path d="M0 10h20" stroke="#444" strokeWidth="2" /></Svg></WindowButton>
        <WindowButton aria-label="还原"><Svg w={22}><rect x="1" y="5" width="15" height="16" rx="3" stroke="#444" strokeWidth="2" /><path d="M6 1h10q5 0 5 5v10" stroke="#444" strokeWidth="2" /></Svg></WindowButton>
        <WindowButton aria-label="关闭"><Svg w={20}><path d="M0 0l20 20M20 0L0 20" stroke="#444" strokeWidth="2" /></Svg></WindowButton>
      </TitleBar>

      <RibbonTabs>
        <FileTab>文件 (F)</FileTab>
        <RibbonTab>基本</RibbonTab>
        <RibbonTab $active>建模</RibbonTab>
        <RibbonTab>仿真</RibbonTab>
        <RibbonTab>控制器(C)</RibbonTab>
        <RibbonTab>RAPID</RibbonTab>
        <RibbonTab>Add-Ins</RibbonTab>
        <TabsEnd>
          <button aria-label="折叠功能区"><Svg w={18} h={14}><path d="M1 13V9l8-8 8 8v4h-4L9 9l-4 4z" stroke="#555b66" strokeWidth="2" /></Svg></button>
          <button aria-label="帮助">
            <Svg w={32}><circle cx="16" cy="16" r="16" fill="#4a80d0" /><path d="M11 12q0-5 5-5t5 5q0 3-3 4-2 1-2 4" stroke="#fff" strokeWidth="3.5" /><circle cx="16" cy="25" r="2" fill="#fff" /></Svg>
          </button>
        </TabsEnd>
      </RibbonTabs>

      <Ribbon>
        <Group $right={13}>
          <GroupBody>
            <Big icon="group" label="组件组" />
            <Big icon="part" label="空部件" />
            <Big icon="smart" label="Smart组件" />
            <Big icon="geometry" label="导入几何体" menu />
            <Big icon="frame" label="框架" menu />
            <Big icon="tag" label="标记" menu />
            <Divider />
            <Big icon="solid" label="固体" menu />
            <Big icon="surface" label="表面" menu />
            <Big icon="curve" label="曲线" menu />
            <SmallList items={[['body', '物体边界'], ['face', '表面边界'], ['points', '从点生成边界']]} />
          </GroupBody>
          <GroupLabel>创建</GroupLabel>
        </Group>
        <Group>
          <GroupBody>
            <SmallList after={12} items={[['intersect', '交叉'], ['subtract', '减去'], ['union', '结合']]} />
            <SmallList after={17} items={[['extrudeFace', '拉伸表面'], ['extrudeCurve', '拉伸曲线'], ['normal', '从法线生成直线']]} />
            <Big icon="modify" label="修改曲线" menu />
          </GroupBody>
          <GroupLabel>CAD 操作</GroupLabel>
        </Group>
        <Group $right={12}>
          <GroupBody>
            <Big icon="point" label="点到点" />
            <SmallList items={[['angle', '角度'], ['diameter', '直径'], ['distance', '最短距离']]} />
          </GroupBody>
          <GroupLabel>测量</GroupLabel>
        </Group>
        <Group $left={5}>
          <GroupBody>
            <FreehandColumn>
              <Combo>
                <select aria-label="参考坐标"><option>大地坐标</option></select>
                <Caret w={9} />
              </Combo>
              <FreehandRow>
                {freehand.map(([label, icon]) => <button key={label} aria-label={label}>{icon}</button>)}
                <Caret color="#b0b0b0" />
              </FreehandRow>
            </FreehandColumn>
          </GroupBody>
          <GroupLabel>Freehand</GroupLabel>
        </Group>
        <Group $left={6} $right={6}>
          <GroupBody>
            <Big icon="mechanism" label="创建机械装置" />
            <Big icon="tool" label="创建工具" />
            <Divider />
            <Big icon="conveyor" label="创建输送带" />
            <Big icon="connect" label="创建连接" disabled />
          </GroupBody>
          <GroupLabel>机械</GroupLabel>
        </Group>
      </Ribbon>

      <Workspace>
        <Panel $flushLeft $row="1 / 3">
          <PanelStrip>
            <PanelTab>布局</PanelTab>
            <PanelTab $active>建模</PanelTab>
            <PanelTab>标记</PanelTab>
            <StripTools>
              <button aria-label="面板菜单"><MenuGlyph /></button>
              <button aria-label="关闭面板"><CloseGlyph /></button>
            </StripTools>
          </PanelStrip>
          <Tree>
            <TreeRow $indent={8} $gap={8}>
              <Svg w={32} h={30}>
                <path d="M7 18h18l6 10H1z" fill="#a9c0de" stroke="#222" strokeWidth="1.5" />
                <path d="M9 2q7-3 16 1v3l-7 0 5 8-4 5 2 6q-5 3-11 0l2-6-1-7 4-5-6-2z" fill="#d6d6d6" stroke="#777" strokeWidth="1.5" />
              </Svg>
              <span><Song>[未保存工作站 ]*</Song></span>
            </TreeRow>
            <TreeRow $indent={38}><u>组件</u></TreeRow>
            <TreeRow $indent={16} $gap={10}><Expander /><PartIcon /><span><Song>部件_1</Song></span></TreeRow>
            <TreeRow $indent={16} $gap={10}><Expander /><PartIcon /><span><Song>部件_2</Song></span></TreeRow>
          </Tree>
        </Panel>

        <Panel>
          <PanelStrip>
            <PanelTab $active $light>视图1 <CloseGlyph /></PanelTab>
            <StripTools $tight>
              <button aria-label="视图菜单"><MenuGlyph /></button>
              <button aria-label="最大化视图"><Svg w={20} h={16}><path d="M1 2h17v12H1z" stroke="#000" strokeWidth="2" /><path d="M0 3h19" stroke="#000" strokeWidth="3" /></Svg></button>
            </StripTools>
          </PanelStrip>
          <Viewport>
            <SceneDrawing />
            <ViewTools $first>
              {viewTools.map(([label, icon, space, on], i) => (
                <ViewTool key={i} aria-label={label} $space={space} $on={on}>{icon}</ViewTool>
              ))}
            </ViewTools>
            <ViewTools>
              <ViewTool $faint aria-label="播放"><View40><path d="M7 2h8l20 17-20 19H7z" fill="#bbb" stroke="#555" strokeWidth="2" /></View40></ViewTool>
              <ViewTool $faint aria-label="停止"><View40><path d="M5 5h30v29H5z" fill="#bbb" stroke="#555" strokeWidth="3" /></View40></ViewTool>
            </ViewTools>
            <ContextMenu>
              {menuItems.map((item) => (
                <li key={item.label}>
                  <MenuItem $strong={item.strong}>
                    <span>{item.icon}</span>
                    {item.label}
                    {item.sub && <Svg w={8} h={14}><path d="M0 0l8 7-8 7z" fill="#3b3b3b" /></Svg>}
                  </MenuItem>
                </li>
              ))}
            </ContextMenu>
          </Viewport>
        </Panel>

        <Panel $flushRight $bg="#eeeef4">
          <PanelStrip>
            <PanelTab $active>文档</PanelTab>
            <StripTools>
              <button aria-label="面板菜单"><MenuGlyph /></button>
              <button aria-label="关闭面板"><CloseGlyph /></button>
            </StripTools>
          </PanelStrip>
          <RadioRow>
            <label><input type="radio" name="scope" />工作站</label>
            <label><input type="radio" name="scope" defaultChecked />搜索</label>
            <label><input type="radio" name="scope" />浏览</label>
            <a href="#locations"><Song>位置...</Song></a>
          </RadioRow>
          <SearchRow>
            <SearchBox>
              <input type="text" placeholder="搜索" aria-label="搜索" />
              <button aria-label="搜索历史"><Svg w={14} h={8}><path d="M1 1l6 6 6-6" stroke="#333" strokeWidth="1.5" /></Svg></button>
            </SearchBox>
            <button aria-label="开始搜索"><Svg w={28}><circle cx="17" cy="11" r="8" stroke="#2f62b4" strokeWidth="4" /><path d="M11 17l-9 9" stroke="#2f62b4" strokeWidth="5" /></Svg></button>
            <button aria-label="展开"><Svg w={28} h={24}><path d="M5 2l9 9 9-9M5 11l9 9 9-9" stroke="#333" strokeWidth="4" /></Svg></button>
          </SearchRow>
          <Results />
        </Panel>

        <Panel $flushRight $col="2 / 4">
          <PanelStrip>
            <PanelTab $active>输出</PanelTab>
            <StripTools>
              <button aria-label="面板菜单"><MenuGlyph /></button>
              <button aria-label="关闭面板"><CloseGlyph /></button>
            </StripTools>
          </PanelStrip>
          <OutputBody>
            <LogTable>
              <colgroup>
                <col width="1228" />
                <col width="290" />
                <col width="290" />
                <col />
              </colgroup>
              <thead>
                <tr>
                  <th>
                    <Source>
                      <span><Song>信息来自:</Song></span>
                      <SourceSelect>
                        <select><option>全部信息</option></select>
                        <Caret color="#000" />
                      </SourceSelect>
                    </Source>
                  </th>
                  <th>时间</th>
                  <th>种类</th>
                  <th />
                </tr>
              </thead>
              <tbody>
                {log.map(([text, time]) => (
                  <tr key={time}>
                    <td><Message><Info /><span><Song>{text}</Song></span></Message></td>
                    <td><Half>2023-04-05 {time}</Half></td>
                    <td>概述</td>
                    <td />
                  </tr>
                ))}
              </tbody>
            </LogTable>
            <ScrollTrack><ScrollThumb /></ScrollTrack>
          </OutputBody>
        </Panel>
      </Workspace>

      <StatusBar>
        <StatusMessage>已创建实体 (部件_2)</StatusMessage>
        <StatusCell $left={11} $right={10}>
          <button>选择方式 <Caret color="#444" /></button>
          <button>捕捉模式 <Caret color="#444" /></button>
        </StatusCell>
        <StatusCell $right={7}>UCS : 工作站</StatusCell>
        <StatusCell $left={4} $right={1}>
          <Coordinates>
            <input aria-label="坐标" defaultValue="-156.36  387.96  0." />
            <Watermark>CSDN @weixin_64540111</Watermark>
          </Coordinates>
        </StatusCell>
      </StatusBar>
    </Page>
  );
}

export default App;
